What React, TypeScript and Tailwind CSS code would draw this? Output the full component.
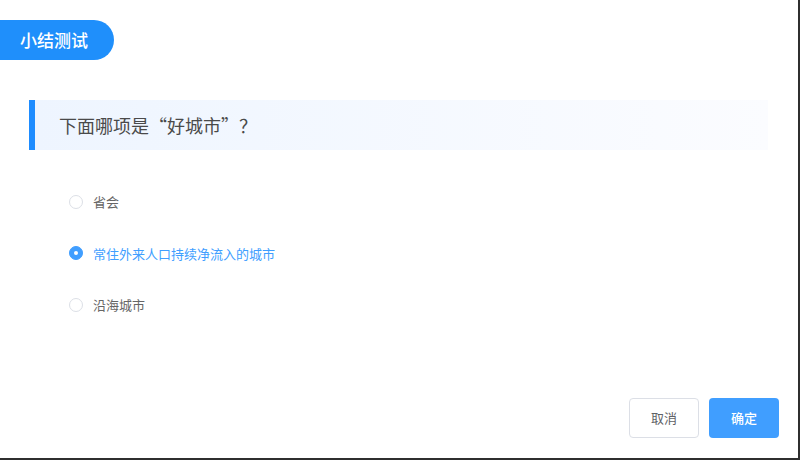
import React, { useState } from "react";

const OPTIONS = ["省会", "常住外来人口持续净流入的城市", "沿海城市"];

const App: React.FC = () => {
  const [selected, setSelected] = useState(1);

  return (
    <div
      className="h-[460px] w-[800px] bg-[#2f2f2f]"
      style={{ fontFamily: '"Noto Sans CJK SC", "Liberation Sans", sans-serif' }}
    >
      <div className="flex h-[458px] w-[798px] flex-col bg-white">
        <div className="pt-5">
          <div className="flex h-10 w-[114px] items-center rounded-r-full bg-[#1f8ffb] pl-5 text-[17px] font-medium text-white">
            小结测试
          </div>
        </div>

        <div className="mt-10 ml-[29px] flex h-[50px] w-[739px] items-center border-l-[6px] border-[#1e8cff] bg-gradient-to-r from-[#eef5ff] to-[#fbfcff] pl-6 text-[18px] text-[#4a4a4a]">
          下面哪项是“好城市”？
        </div>

        <div className="mt-[26px] flex flex-col pl-[69px]">
          {OPTIONS.map((opt, i) => {
            const active = i === selected;
            return (
              <button
                key={opt}
                type="button"
                onClick={() => setSelected(i)}
                className="flex h-[51.5px] items-center gap-[10px] text-left"
              >
                <span
                  className={`flex h-[14px] w-[14px] items-center justify-center rounded-full border ${
                    active ? "border-[#409eff] bg-[#409eff]" : "border-[#dcdfe6] bg-white"
                  }`}
                >
                  {active && <span className="h-1 w-1 rounded-full bg-white" />}
                </span>
                <span className={`text-[13px] ${active ? "text-[#409eff]" : "text-[#666]"}`}>{opt}</span>
              </button>
            );
          })}
        </div>

        <div className="mt-auto flex justify-end gap-[10px] pr-[19px] pb-5">
          <button
            type="button"
            className="h-10 w-[70px] rounded border border-[#dcdfe6] bg-white text-[13px] text-[#606266]"
          >
            取消
          </button>
          <button type="button" className="h-10 w-[70px] rounded bg-[#409eff] text-[13px] font-medium text-white">
            确定
          </button>
        </div>
      </div>
    </div>
  );
};

export default App;
